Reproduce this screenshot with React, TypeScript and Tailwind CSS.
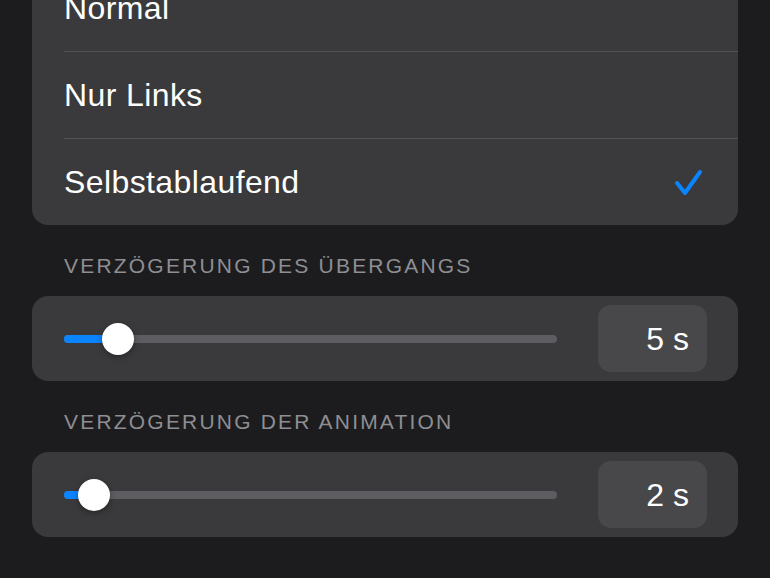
const options = [
  { label: "Normal", selected: false },
  { label: "Nur Links", selected: false },
  { label: "Selbstablaufend", selected: true },
];

const sliders = [
  { title: "Verzögerung des Übergangs", fill: 54, value: "5 s" },
  { title: "Verzögerung der Animation", fill: 30, value: "2 s" },
];

const CheckMark = () => (
  <svg width="32" height="32" viewBox="0 0 32 32" fill="none">
    <path
      d="M6 17 L14 27 L29 6"
      stroke="#0a84ff"
      strokeWidth="4"
      strokeLinecap="round"
      strokeLinejoin="round"
    />
  </svg>
);

const SectionHeader = ({ text }: { text: string }) => (
  <div className="pt-[28px] pb-[18px] pl-8 text-[21px] leading-[25px] tracking-[2.2px] uppercase text-[#8e8e93]">
    {text}
  </div>
);

const SliderCard = ({ fill, value }: { fill: number; value: string }) => (
  <div className="flex items-center h-[85px] rounded-[16px] bg-[#3a3a3c] pl-8 pr-[31px]">
    <div className="relative flex-1 h-2 rounded-full bg-[#5d5d61]">
      <div
        className="absolute left-0 top-0 h-2 rounded-full bg-[#0a84ff]"
        style={{ width: fill }}
      />
      <div
        className="absolute top-1/2 w-8 h-8 -ml-4 -mt-4 rounded-full bg-white shadow-[0_2px_6px_rgba(0,0,0,0.35)]"
        style={{ left: fill }}
      />
    </div>
    <div className="ml-[41px] flex items-center justify-end w-[109px] h-[67px] rounded-[13px] bg-[#48484a] pr-[18px] text-[32px] text-white">
      {value}
    </div>
  </div>
);

export default function App() {
  return (
    <div
      className="h-[578px] w-full overflow-hidden bg-[#1c1c1e] px-8"
      style={{ fontFamily: '"Liberation Sans", Arial, sans-serif' }}
    >
      <div className="-mt-[35px] rounded-[16px] bg-[#3a3a3c]">
        {options.map((opt, i) => (
          <div key={opt.label} className="pl-8">
            <div
              className={`flex items-center justify-between pr-[35px] ${
                i < options.length - 1
                  ? "h-[87px] border-b border-[#515154]"
                  : "h-[86px]"
              }`}
            >
              <span className="text-[32px] tracking-[0.4px] text-white">
                {opt.label}
              </span>
              {opt.selected && <CheckMark />}
            </div>
          </div>
        ))}
      </div>

      {sliders.map((s) => (
        <div key={s.title}>
          <SectionHeader text={s.title} />
          <SliderCard fill={s.fill} value={s.value} />
        </div>
      ))}
    </div>
  );
}
